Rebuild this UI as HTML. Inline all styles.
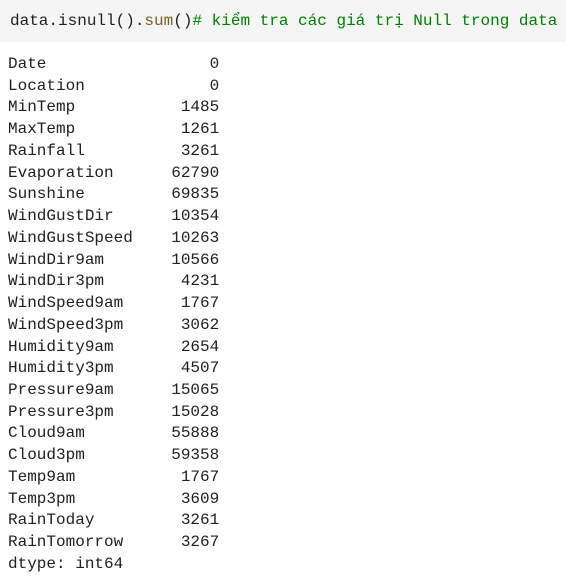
<!DOCTYPE html>
<html><head><style>
html,body{margin:0;padding:0;background:#fff;width:566px;height:585px;overflow:hidden}
.code{position:absolute;left:0;top:0;width:566px;height:42px;background:#f5f5f5}
.code pre{margin:0;position:absolute;left:10px;top:10px;font:16px/22px "Liberation Mono",monospace;color:#212121;white-space:pre}
.f{color:#795e26}.c{color:#008000}
.out{margin:0;position:absolute;left:8px;top:54px;font:16px/21.74px "Liberation Mono",monospace;color:#212121;white-space:pre}
</style></head><body>
<div class="code"><pre>data.isnull().<span class="f">sum</span>()<span class="c"># kiểm tra các giá trị Null trong data</span></pre></div>
<pre class="out">Date                 0
Location             0
MinTemp           1485
MaxTemp           1261
Rainfall          3261
Evaporation      62790
Sunshine         69835
WindGustDir      10354
WindGustSpeed    10263
WindDir9am       10566
WindDir3pm        4231
WindSpeed9am      1767
WindSpeed3pm      3062
Humidity9am       2654
Humidity3pm       4507
Pressure9am      15065
Pressure3pm      15028
Cloud9am         55888
Cloud3pm         59358
Temp9am           1767
Temp3pm           3609
RainToday         3261
RainTomorrow      3267
dtype: int64</pre>
</body></html>
